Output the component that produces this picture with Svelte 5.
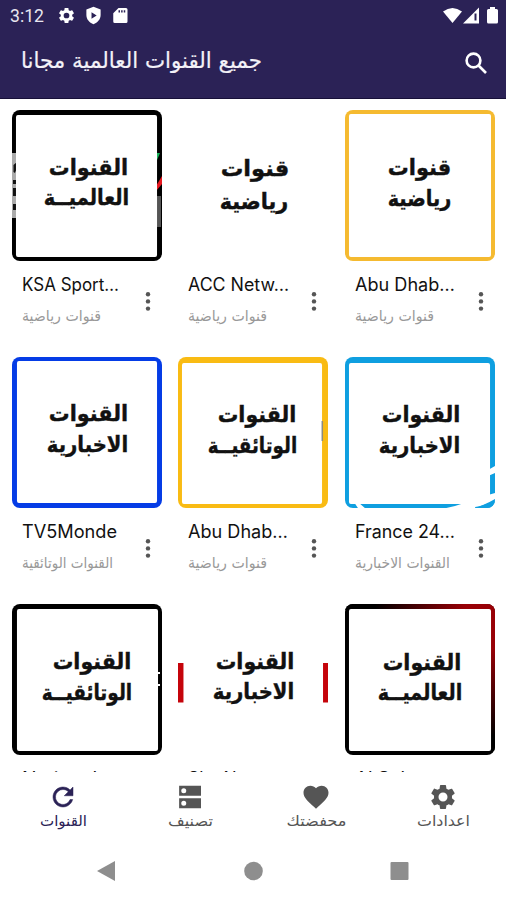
<script>
  const bold = [
    [['القنوات', 37, 117, 65.500], ['العالميــة', 32, 118, 95.500]],
    [['قنوات', 43, 112, 66.500], ['رياضية', 42, 111, 99]],
    [['قنوات', 43, 107, 65], ['رياضية', 43, 107, 96]],
    [['القنوات', 37, 117, 64.500], ['الاخبارية', 35, 117, 95]],
    [['القنوات', 40, 119, 65.500], ['الوتائقيــة', 30, 120, 96]],
    [['القنوات', 37, 116, 65.500], ['الاخبارية', 34, 116, 96]],
    [['القنوات', 41, 120, 65.500], ['الوتائقيــة', 30, 121, 96]],
    [['القنوات', 38, 117, 65], ['الاخبارية', 35, 117, 95]],
    [['القنوات', 38, 117, 66], ['العالميــة', 33, 118, 96]],
  ];
  const meta = [
    { title: 'KSA Sport…', tw: 97, sub: 'قنوات رياضية', sw: 79, color: '#000', ins: [5, 5, 4, 4] },
    { title: 'ACC Netw…', tw: 101, sub: 'قنوات رياضية', sw: 79 },
    { title: 'Abu Dhab…', tw: 100, sub: 'قنوات رياضية', sw: 79, color: '#f5ba30', ins: [4, 4, 4, 4] },
    { title: 'TV5Monde', tw: 95, sub: 'القنوات الوتائقية', sw: 91, color: '#053ce6', ins: [4, 5, 5, 5] },
    { title: 'Abu Dhab…', tw: 100, sub: 'قنوات رياضية', sw: 79, color: '#f9bb13', ins: [6, 6, 4, 4] },
    { title: 'France 24…', tw: 100, sub: 'القنوات الاخبارية', sw: 95, color: '#0f9fe0', ins: [6, 5, 4, 4] },
    { title: 'National…', tw: 92, sub: 'القنوات الوتائقية', sw: 91, color: '#000', ins: [5, 4, 4, 5] },
    { title: 'Sky News…', tw: 97, sub: 'القنوات الاخبارية', sw: 95 },
    { title: 'Al Saba…', tw: 84, sub: 'القنوات العالمية', sw: 91, color: '#000', ins: [5, 4, 4, 4] },
  ];
  const channels = meta.map((m, i) => ({ ...m, lines: bold[i] }));
  const nav = [
    { label: 'القنوات', w: 47, icon: 'refresh', active: true },
    { label: 'تصنيف', w: 45, icon: 'dns' },
    { label: 'محفضتك', w: 60, icon: 'heart' },
    { label: 'اعدادات', w: 53, icon: 'gear' },
  ];
  const gear = 'M19.14 12.94c.04-.3.06-.61.06-.94s-.02-.64-.07-.94l2.03-1.58c.18-.14.23-.41.12-.61l-1.92-3.32c-.12-.22-.37-.29-.59-.22l-2.39.96c-.5-.38-1.03-.7-1.62-.94l-.36-2.54c-.04-.24-.24-.41-.48-.41h-3.84c-.24 0-.43.17-.47.41l-.36 2.54c-.59.24-1.13.57-1.62.94l-2.39-.96c-.22-.08-.47 0-.59.22L2.74 8.87c-.12.21-.08.47.12.61l2.03 1.58c-.05.3-.09.63-.09.94s.02.64.07.94l-2.03 1.58c-.18.14-.23.41-.12.61l1.92 3.32c.12.22.37.29.59.22l2.39-.96c.5.38 1.03.7 1.62.94l.36 2.54c.05.24.24.41.48.41h3.84c.24 0 .44-.17.47-.41l.36-2.54c.59-.24 1.13-.56 1.62-.94l2.39.96c.22.08.47 0 .59-.22l1.92-3.32c.12-.22.07-.47-.12-.61zM12 15.6A3.6 3.6 0 1 1 12 8.4a3.6 3.6 0 0 1 0 7.2z';
</script>

<div class="screen">
  <header>
    <div class="status">
      <svg class="clock" width="38" height="20"><text x="0" y="16" textLength="34" lengthAdjust="spacingAndGlyphs">3:12</text></svg>
      <svg class="s-gear" width="19" height="19" viewBox="0 0 24 24"><path d={gear} /></svg>
      <svg class="s-shield" width="19" height="19" viewBox="0 0 24 24"><path fill-rule="evenodd" d="M12 1 3 4.500v7c0 5.500 3.800 9.500 9 11.500 5.200-2 9-6 9-11.500v-7zM9.500 8 16 12l-6.500 4z" /></svg>
      <svg class="s-card" width="18" height="19" viewBox="0 0 24 24"><path fill-rule="evenodd" d="M20 2H10L3 9v11a2 2 0 0 0 2 2h15a2 2 0 0 0 2-2V4a2 2 0 0 0-2-2zM10 5h2v3h-2zM13.500 5h2v3h-2zM17 5h2v3h-2z" /></svg>
      <span class="grow"></span>
      <svg width="56" height="20" viewBox="0 0 56 20">
        <path d="M0 5.500Q9.500-1.500 19 5.500L9.500 17z" />
        <path d="M20 17.500 36 1.500v16z" />
        <path d="M31.500 7.500h2v7h-2z" fill="#2b2256" />
        <path d="M47 1h5v2h1.500q1.500 0 1.500 1.500V16q0 1.500-1.500 1.500h-8Q44 17.500 44 16V4.500Q44 3 45.500 3H47z" />
      </svg>
    </div>
    <div class="bar">
      <svg class="heading" width="250" height="40"><text x="120.500" y="26" text-anchor="middle" textLength="241" lengthAdjust="spacingAndGlyphs">جميع القنوات العالمية مجانا</text></svg>
      <svg class="search" width="23" height="23" viewBox="0 0 23 23"><circle cx="8.500" cy="8.500" r="6.900" /><path d="m13.500 13.500 7.500 7.500" /></svg>
    </div>
  </header>

  <main>
    {#each channels as ch, i}
      <article>
        <svg class="tile" width="150" height="151" viewBox="0 0 151 151" preserveAspectRatio="none">
          <defs>
            <linearGradient id="redFade" x1="0.2" y1="0" x2="0.8" y2="0"><stop offset="0" stop-color="#000" /><stop offset="1" stop-color="#980006" /></linearGradient>
            <linearGradient id="redSide" x1="0" y1="0" x2="0" y2="1"><stop offset="0.3" stop-color="#980006" /><stop offset="0.9" stop-color="#000" /></linearGradient>
            <clipPath id="round"><rect width="151" height="151" rx="8" /></clipPath>
          </defs>
          <g clip-path="url(#round)">
            {#if ch.color}
              <rect width="151" height="151" fill={ch.color} />
            {/if}
            {#if i === 8}
              <rect width="151" height="6" fill="url(#redFade)" />
              <rect x="145" width="6" height="147" fill="url(#redSide)" />
            {/if}
            {#if i === 0}
              <path d="M0 43h5v65H0z" fill="#aaa" />
              <path d="M1.500 55 5 52v6l-2 5-1.500-1zM1 70h4v4H1zM1 78h4v8H1zM1 94h4v6H1z" fill="#111" />
              <path d="M144 43h5l-3 7h-2z" fill="#14b257" />
              <path d="M151 66v8l-6 7v-5z" fill="#e8171f" />
              <path d="M145 86h5v31h-5z" fill="#555" />
            {/if}
            {#if ch.ins}
              <rect x={ch.ins[3]} y={ch.ins[0]} width={151 - ch.ins[1] - ch.ins[3]} height={151 - ch.ins[0] - ch.ins[2]} rx="2" fill="#fff" />
            {/if}
            {#if i === 4}<path d="M144.500 64h1.500v20h-1.500z" fill="#8b8b80" />{/if}
            {#if i === 5}
              <path d="M144 113l7-4v7l-7 3zM144 138l7-2v8l-20 7H102q10-2 18-5zM9 145h4l7 6h-7z" fill="#fff" />
              <path d="M131 150q8-1 20-8v9h-20z" fill="#0f9fe0" />
            {/if}
            {#if i === 6}<path d="M145 68h4v2h-4zM145 80h4v2h-4zM145 71h2v7h-2z" fill="#fff" />{/if}
            {#if i === 7}
              <path d="M0 59h5.500v39.500H0z" fill="#c5040b" />
              <path d="M146 59h5v39.500h-5z" fill="#c5040b" />
            {/if}
          </g>
          {#each ch.lines as [text, a, b, y]}
            <text x={(a + b) / 2} {y} text-anchor="middle" textLength={b - a} lengthAdjust="spacingAndGlyphs">{text}</text>
          {/each}
        </svg>
        <div class="info">
          <svg width="118" height="70">
            <text class="title" x="0" y="30" textLength={ch.tw} lengthAdjust="spacingAndGlyphs">{ch.title}</text>
            <text class="sub" x={ch.sw / 2} y="59.500" text-anchor="middle" textLength={ch.sw} lengthAdjust="spacingAndGlyphs">{ch.sub}</text>
          </svg>
          <svg width="16" height="70" fill="#555"><circle cx="8" cy="33.200" r="2.200" /><circle cx="8" cy="40.400" r="2.200" /><circle cx="8" cy="47.600" r="2.200" /></svg>
        </div>
      </article>
    {/each}
  </main>

  <nav>
    {#each nav as item}
      <div class="item" class:active={item.active}>
        <svg width="30" height="30" viewBox="0 0 24 24">
          {#if item.icon === 'refresh'}
            <path stroke="#2b2256" stroke-width="0.400" d="M17.650 6.350A8 8 0 1 0 19.730 14h-2.080A6 6 0 1 1 12 6c1.660 0 3.140.69 4.220 1.780L13 11h7V4z" />
          {:else if item.icon === 'dns'}
            <path fill-rule="evenodd" d="M3.300 13h17.500v8H3.300zM7 19a2 2 0 1 0 0-4 2 2 0 0 0 0 4zM3.300 3h17.500v8H3.300zM7 9a2 2 0 1 0 0-4 2 2 0 0 0 0 4z" />
          {:else if item.icon === 'heart'}
            <path d="m12 21.350-1.450-1.320C5.400 15.360 2 12.280 2 8.500 2 5.420 4.420 3 7.500 3c1.740 0 3.410.81 4.500 2.090C13.090 3.810 14.760 3 16.500 3 19.580 3 22 5.420 22 8.500c0 3.780-3.400 6.860-8.550 11.540z" />
          {:else}
            <path d={gear} />
          {/if}
        </svg>
        <svg width="80" height="24"><text x="40.500" y="14" text-anchor="middle" textLength={item.w} lengthAdjust="spacingAndGlyphs">{item.label}</text></svg>
      </div>
    {/each}
  </nav>

  <footer>
    <svg width="20" height="22"><path d="M0 11 18 1v20z" /></svg>
    <svg width="20" height="22"><circle cx="10.500" cy="11" r="9.300" /></svg>
    <svg width="20" height="22"><rect x="1.500" y="2" width="18" height="18" rx="1" /></svg>
  </footer>
</div>

<style>
  .screen { width: 506px; height: 900px; overflow: hidden; display: flex; flex-direction: column; background: #fff; font-family: 'DejaVu Sans', sans-serif; }
  svg { display: block; flex: none; overflow: visible; }
  header { box-sizing: border-box; height: 99px; flex: none; background: #2b2256; border-bottom: 1px solid #171038; fill: #fff; }
  .status { display: flex; padding: 6px 7px 0 10px; height: 30px; box-sizing: border-box; }
  .clock text { font: 17.500px Roboto, sans-serif; fill: #e8e6ef; }
  .s-gear { margin-left: 9px; }
  .s-shield { margin-left: 8px; }
  .s-card { margin-left: 8px; }
  .grow { flex: 1; }
  .bar { display: flex; justify-content: space-between; align-items: center; padding: 0 18px 0 20.500px; height: 63px; }
  .heading text { font-size: 22px; fill: #f4f2f8; stroke: #f4f2f8; stroke-width: 0.2px; }
  .search { fill: none; stroke: #fff; stroke-width: 2.600px; margin-top: 3px; }
  main { height: 673px; flex: none; overflow: hidden; box-sizing: border-box; padding: 11px 11px 0 11.500px; display: grid; grid-template-columns: repeat(3, 151px); column-gap: 15.500px; grid-auto-rows: 247px; align-content: start; }
  .tile text { font-weight: bold; font-size: 22px; fill: #111; stroke: #111; stroke-width: 0.4px; }
  .info { display: flex; padding-left: 10px; }
  .title { font: 18px Inter, sans-serif; fill: #111; }
  .sub { font-size: 15px; fill: #999; }
  nav { display: flex; height: 71px; flex: none; padding-top: 10px; box-sizing: border-box; }
  .item { flex: 1; display: flex; flex-direction: column; align-items: center; fill: #555; font-size: 15px; }
  .item.active { fill: #2b2256; }
  footer { display: flex; flex: none; justify-content: space-between; padding: 17px 97px 0; fill: #8e8e8e; }
</style>
